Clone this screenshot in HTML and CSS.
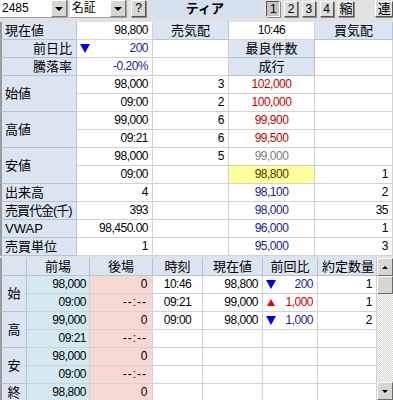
FILE: index.html
```html
<!DOCTYPE html>
<html>
<head>
    <meta charset="UTF-8">
    <title>板情報</title>
    <link rel="stylesheet" href="styles.css">
</head>
<body>
    <div class="toolbar">
        <div class="combo code">
            <span class="combo-text">2485</span>
            <span class="combo-btn"></span>
        </div>
        <div class="combo market">
            <span class="combo-text">名証</span>
            <span class="combo-btn"></span>
        </div>
        <span class="tb-btn help">?</span>
        <div class="band">ティア</div>
        <span class="tb-btn on">1</span>
        <span class="tb-btn">2</span>
        <span class="tb-btn">3</span>
        <span class="tb-btn">4</span>
        <span class="tb-btn wide">縮</span>
        <span class="tb-btn wide last">連</span>
    </div>

    <div class="quote">
        <div class="c lbl">現在値</div>
        <div class="c num">98,800</div>
        <div class="c hd">売気配</div>
        <div class="c ctr num">10:46</div>
        <div class="c hd">買気配</div>

        <div class="c lbl right">前日比</div>
        <div class="c num tri-cell"><span class="tri down"></span><span class="blue">200</span></div>
        <div class="c"></div>
        <div class="c hd">最良件数</div>
        <div class="c"></div>

        <div class="c lbl right">騰落率</div>
        <div class="c num blue">-0.20%</div>
        <div class="c"></div>
        <div class="c hd">成行</div>
        <div class="c"></div>

        <div class="c lbl span2">始値</div>
        <div class="c num">98,000</div>
        <div class="c num">3</div>
        <div class="c ctr num red">102,000</div>
        <div class="c"></div>
        <div class="c num">09:00</div>
        <div class="c num">2</div>
        <div class="c ctr num red">100,000</div>
        <div class="c"></div>

        <div class="c lbl span2">高値</div>
        <div class="c num">99,000</div>
        <div class="c num">6</div>
        <div class="c ctr num red">99,900</div>
        <div class="c"></div>
        <div class="c num">09:21</div>
        <div class="c num">6</div>
        <div class="c ctr num red">99,500</div>
        <div class="c"></div>

        <div class="c lbl span2">安値</div>
        <div class="c num">98,000</div>
        <div class="c num">5</div>
        <div class="c ctr num gray">99,000</div>
        <div class="c"></div>
        <div class="c num">09:00</div>
        <div class="c"></div>
        <div class="c ctr num current">98,800</div>
        <div class="c num">1</div>

        <div class="c lbl">出来高</div>
        <div class="c num">4</div>
        <div class="c"></div>
        <div class="c ctr num blue">98,100</div>
        <div class="c num">2</div>

        <div class="c lbl tight">売買代金(千)</div>
        <div class="c num">393</div>
        <div class="c"></div>
        <div class="c ctr num blue">98,000</div>
        <div class="c num">35</div>

        <div class="c lbl">VWAP</div>
        <div class="c num">98,450.00</div>
        <div class="c"></div>
        <div class="c ctr num blue">96,000</div>
        <div class="c num">1</div>

        <div class="c lbl">売買単位</div>
        <div class="c num">1</div>
        <div class="c"></div>
        <div class="c ctr num blue">95,000</div>
        <div class="c num">3</div>
    </div>

    <div class="lower">
        <div class="session">
            <div class="c lbl2"></div>
            <div class="c hd">前場</div>
            <div class="c hd">後場</div>
            <div class="c hd">時刻</div>
            <div class="c hd">現在値</div>
            <div class="c hd">前回比</div>
            <div class="c hd">約定数量</div>

            <div class="c lbl2 span2">始</div>
            <div class="c num am">98,000</div>
            <div class="c num pm">0</div>
            <div class="c ctr num">10:46</div>
            <div class="c num">98,800</div>
            <div class="c num tri-cell"><span class="tri down"></span><span class="blue">200</span></div>
            <div class="c num">1</div>

            <div class="c num am">09:00</div>
            <div class="c num pm dash">--:--</div>
            <div class="c ctr num">09:21</div>
            <div class="c num">99,000</div>
            <div class="c num tri-cell"><span class="tri up"></span><span class="red">1,000</span></div>
            <div class="c num">1</div>

            <div class="c lbl2 span2">高</div>
            <div class="c num am">99,000</div>
            <div class="c num pm">0</div>
            <div class="c ctr num">09:00</div>
            <div class="c num">98,000</div>
            <div class="c num tri-cell"><span class="tri down"></span><span class="blue">1,000</span></div>
            <div class="c num">2</div>

            <div class="c num am">09:21</div>
            <div class="c num pm dash">--:--</div>
            <div class="c"></div>
            <div class="c"></div>
            <div class="c"></div>
            <div class="c"></div>

            <div class="c lbl2 span2">安</div>
            <div class="c num am">98,000</div>
            <div class="c num pm">0</div>
            <div class="c"></div>
            <div class="c"></div>
            <div class="c"></div>
            <div class="c"></div>

            <div class="c num am">09:00</div>
            <div class="c num pm dash">--:--</div>
            <div class="c"></div>
            <div class="c"></div>
            <div class="c"></div>
            <div class="c"></div>

            <div class="c lbl2">終</div>
            <div class="c num am">98,800</div>
            <div class="c num pm">0</div>
            <div class="c"></div>
            <div class="c"></div>
            <div class="c"></div>
            <div class="c"></div>
        </div>
        <div class="scroll">
            <div class="sb-btn"><span class="arrow up"></span></div>
            <div class="sb-thumb"></div>
            <div class="sb-track"></div>
            <div class="sb-btn"><span class="arrow down"></span></div>
        </div>
    </div>
</body>
</html>
```

FILE: styles.css
```css
body {
    margin: 0;
    width: 393px;
    height: 400px;
    overflow: hidden;
    font-family: "Liberation Sans", "Noto Sans CJK JP", sans-serif;
    font-size: 13px;
    color: #000;
    background: #e1e1e1;
}

/* top toolbar */
.toolbar {
    display: flex;
    align-items: flex-start;
    height: 22px;
}
.combo {
    display: flex;
    height: 18px;
    box-sizing: border-box;
    background: #fff;
    border-right: 1px solid #a0a0a0;
    border-bottom: 1px solid #a0a0a0;
}
.code {
    width: 69px;
}
.market {
    width: 58px;
    margin-left: 2px;
}
.combo-text {
    flex: 1;
    padding-left: 2px;
    line-height: 17px;
    font-size: 12px;
}
.combo-btn {
    width: 16px;
    box-sizing: border-box;
    background: #d8d6d0;
    border: 1px solid;
    border-color: #fff #7a7a7a #7a7a7a #fff;
    display: flex;
    align-items: center;
    justify-content: center;
}
.combo-btn::after {
    content: "";
    border-left: 4px solid transparent;
    border-right: 4px solid transparent;
    border-top: 4px solid #000;
}
.tb-btn {
    width: 14px;
    height: 16px;
    margin-top: 1px;
    margin-left: 4px;
    box-sizing: border-box;
    background: #dcdcdc;
    border: 1px solid;
    border-color: #fff #555 #555 #fff;
    box-shadow: 1px 1px 0 #8a8a8a;
    text-align: center;
    line-height: 14px;
    font-size: 12px;
}
.tb-btn.on {
    background: #c4c4c4;
    border-color: #555 #fff #fff #555;
}
.tb-btn.help {
    width: 16px;
    height: 17px;
    margin-top: 0;
    background: #d8d6d0;
}
.tb-btn.wide {
    width: 17px;
    font-size: 13px;
}
.tb-btn.last {
    width: 18px;
    margin-left: 21px;
}
.band {
    width: 113px;
    height: 18px;
    margin-left: 3px;
    background: #d4e0ee;
    font-weight: bold;
    text-align: center;
    line-height: 18px;
    padding-right: 2px;
}

/* quote grid */
.quote {
    display: grid;
    grid-template-columns: 77px 76px 76px 86px 78px;
    grid-auto-rows: 18px;
}
.c {
    box-sizing: border-box;
    background: #fff;
    border-right: 1px solid #d2d2d2;
    border-bottom: 1px solid #d2d2d2;
    line-height: 17px;
    padding: 0 4px;
    white-space: nowrap;
    overflow: hidden;
}
.lbl {
    background: #dbe5f1;
    border-color: #b6c3d4;
    border-left: 2px solid #9a9a9a;
    padding-left: 3px;
}
.lbl.right {
    text-align: right;
}
.lbl.tight {
    padding-right: 0;
    letter-spacing: -1px;
}
.span2 {
    grid-row: span 2;
    display: flex;
    align-items: center;
}
.hd {
    background: #dbe5f1;
    border-color: #b6c3d4;
    text-align: center;
}
.num {
    text-align: right;
    font-size: 12px;
    letter-spacing: -0.5px;
}
.ctr {
    text-align: center;
}
.blue {
    color: #1a1a96;
}
.red {
    color: #c40000;
}
.gray {
    color: #7d7d7d;
}
.current {
    background: #ffff9c;
    color: #4a3a00;
}
.tri-cell {
    display: flex;
    align-items: center;
    justify-content: space-between;
    padding-left: 3px;
}
.tri {
    width: 0;
    height: 0;
}
.tri.down {
    border-left: 5px solid transparent;
    border-right: 5px solid transparent;
    border-top: 9px solid #0000f0;
}
.tri.up {
    margin-left: 1px;
    border-left: 4px solid transparent;
    border-right: 4px solid transparent;
    border-bottom: 7px solid #f00000;
}

/* lower session grid */
.lower {
    display: flex;
    margin-top: 2px;
}
.session {
    display: grid;
    grid-template-columns: 27px 63px 63px 50px 60px 55px 59px;
    grid-auto-rows: 18px;
}
.lbl2 {
    background: #dbe5f1;
    border-color: #b6c3d4;
    border-left: 2px solid #9a9a9a;
    padding: 0;
    justify-content: center;
    text-align: center;
}
.am {
    background: #d3e8f0;
    padding-right: 3px;
}
.pm {
    background: #f7d7d2;
    padding-right: 5px;
}
.dash {
    letter-spacing: 1px;
}

/* scrollbar */
.scroll {
    width: 16px;
    height: 142px;
    display: flex;
    flex-direction: column;
    background: repeating-conic-gradient(#fff 0 25%, #d6d3cc 0 50%) 0 0 / 2px 2px;
}
.sb-btn,
.sb-thumb {
    height: 18px;
    box-sizing: border-box;
    background: #d8d6d0;
    border: 1px solid;
    border-color: #fff #6a6a6a #6a6a6a #fff;
    display: flex;
    align-items: center;
    justify-content: center;
}
.sb-track {
    flex: 1;
}
.arrow {
    width: 0;
    height: 0;
    border-left: 3px solid transparent;
    border-right: 3px solid transparent;
}
.arrow.up {
    border-bottom: 3px solid #000;
}
.arrow.down {
    border-top: 3px solid #000;
}
```
